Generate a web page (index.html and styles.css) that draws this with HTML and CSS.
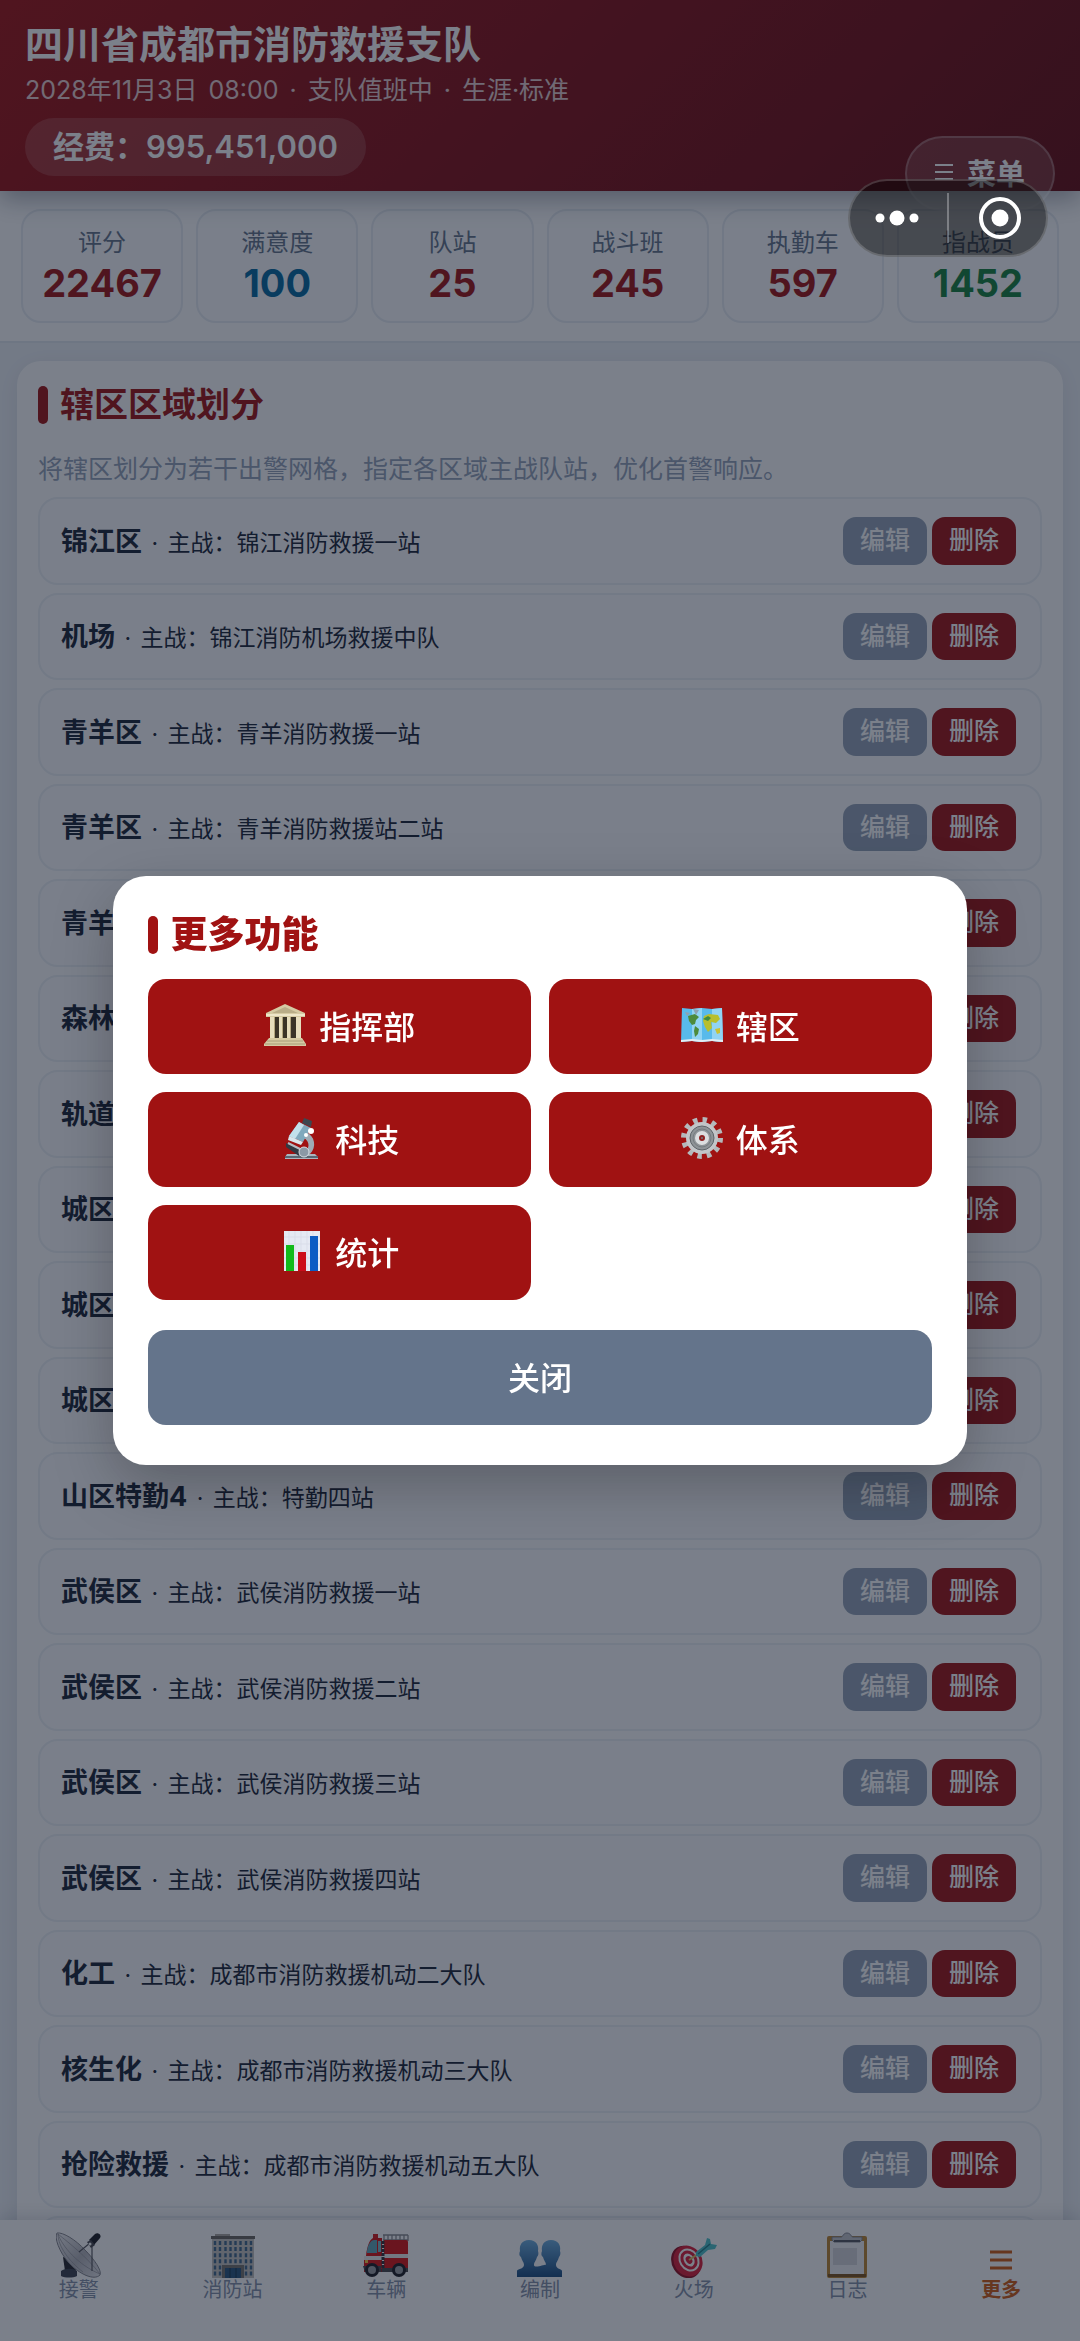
FILE: index.html
```html
<!DOCTYPE html>
<html lang="zh-CN">
<head>
    <meta charset="UTF-8">
    <meta name="viewport" content="width=device-width, initial-scale=1.0">
    <title>四川省成都市消防救援支队</title>
    <link rel="stylesheet" href="styles.css">
</head>
<body>
    <div class="app">
        <header class="header">
            <h1>四川省成都市消防救援支队</h1>
            <p class="subtitle"><span>2028年11月3日</span> <span>08:00</span> <span>·</span> <span>支队值班中</span> <span>·</span> <span>生涯·标准</span></p>
            <div class="budget">经费：995,451,000</div>
            <button type="button" class="menu-btn">
                <svg width="18" height="18" viewBox="0 0 18 18"><path d="M0 2h18M0 9h18M0 16h18" stroke="currentColor" stroke-width="2"/></svg>
                菜单
            </button>
        </header>

        <section class="stats">
            <div class="stat"><span>评分</span><b>22467</b></div>
            <div class="stat blue"><span>满意度</span><b>100</b></div>
            <div class="stat"><span>队站</span><b>25</b></div>
            <div class="stat"><span>战斗班</span><b>245</b></div>
            <div class="stat"><span>执勤车</span><b>597</b></div>
            <div class="stat green"><span>指战员</span><b>1452</b></div>
        </section>

        <main class="content">
            <section class="panel">
                <h2 class="section-title">辖区区域划分</h2>
                <p class="hint">将辖区划分为若干出警网格，指定各区域主战队站，优化首警响应。</p>
                <ul class="zones">
                    <li><p><strong>锦江区</strong> <span class="dot">·</span> 主战：锦江消防救援一站</p><button type="button" class="edit">编辑</button><button type="button" class="delete">删除</button></li>
                    <li><p><strong>机场</strong> <span class="dot">·</span> 主战：锦江消防机场救援中队</p><button type="button" class="edit">编辑</button><button type="button" class="delete">删除</button></li>
                    <li><p><strong>青羊区</strong> <span class="dot">·</span> 主战：青羊消防救援一站</p><button type="button" class="edit">编辑</button><button type="button" class="delete">删除</button></li>
                    <li><p><strong>青羊区</strong> <span class="dot">·</span> 主战：青羊消防救援站二站</p><button type="button" class="edit">编辑</button><button type="button" class="delete">删除</button></li>
                    <li><p><strong>青羊区</strong></p><button type="button" class="edit">编辑</button><button type="button" class="delete">删除</button></li>
                    <li><p><strong>森林</strong></p><button type="button" class="edit">编辑</button><button type="button" class="delete">删除</button></li>
                    <li><p><strong>轨道</strong></p><button type="button" class="edit">编辑</button><button type="button" class="delete">删除</button></li>
                    <li><p><strong>城区</strong></p><button type="button" class="edit">编辑</button><button type="button" class="delete">删除</button></li>
                    <li><p><strong>城区</strong></p><button type="button" class="edit">编辑</button><button type="button" class="delete">删除</button></li>
                    <li><p><strong>城区</strong></p><button type="button" class="edit">编辑</button><button type="button" class="delete">删除</button></li>
                    <li><p><strong>山区特勤4</strong> <span class="dot">·</span> 主战：特勤四站</p><button type="button" class="edit">编辑</button><button type="button" class="delete">删除</button></li>
                    <li><p><strong>武侯区</strong> <span class="dot">·</span> 主战：武侯消防救援一站</p><button type="button" class="edit">编辑</button><button type="button" class="delete">删除</button></li>
                    <li><p><strong>武侯区</strong> <span class="dot">·</span> 主战：武侯消防救援二站</p><button type="button" class="edit">编辑</button><button type="button" class="delete">删除</button></li>
                    <li><p><strong>武侯区</strong> <span class="dot">·</span> 主战：武侯消防救援三站</p><button type="button" class="edit">编辑</button><button type="button" class="delete">删除</button></li>
                    <li><p><strong>武侯区</strong> <span class="dot">·</span> 主战：武侯消防救援四站</p><button type="button" class="edit">编辑</button><button type="button" class="delete">删除</button></li>
                    <li><p><strong>化工</strong> <span class="dot">·</span> 主战：成都市消防救援机动二大队</p><button type="button" class="edit">编辑</button><button type="button" class="delete">删除</button></li>
                    <li><p><strong>核生化</strong> <span class="dot">·</span> 主战：成都市消防救援机动三大队</p><button type="button" class="edit">编辑</button><button type="button" class="delete">删除</button></li>
                    <li><p><strong>抢险救援</strong> <span class="dot">·</span> 主战：成都市消防救援机动五大队</p><button type="button" class="edit">编辑</button><button type="button" class="delete">删除</button></li>
                    <li></li>
                </ul>
            </section>
        </main>

        <nav class="tabbar">
            <a href="#alarm">
                <!-- satellite dish -->
                <svg viewBox="0 0 46 46">
                    <defs><linearGradient id="dish" x1="0" y1="0" x2="1" y2="1"><stop offset="0" stop-color="#f4f4f6"/><stop offset=".55" stop-color="#b4b4ba"/><stop offset="1" stop-color="#e6e6ea"/></linearGradient></defs>
                    <path d="M7 25l11 4 2 9-11 1z" fill="#24242a"/>
                    <path d="M5 39c4-3 13-3 16 0v5c-4 2-12 2-16 0z" fill="#3d424e"/>
                    <path d="M1 1C7 0 20 8 29 18c10 10 17 21 15 25-6 6-21-1-31-12C3 20-2 5 1 1z" fill="url(#dish)" stroke="#85858c"/>
                    <path d="M2 2c4 12 20 31 42 40M2 2c11 9 28 22 42 40M2 2c0 13 12 28 25 38" fill="none" stroke="#909098" stroke-width=".7"/>
                    <path d="M23 20l11-9M36 15v24M34 11l2 4" fill="none" stroke="#55555c" stroke-width="1.2"/>
                    <path d="M33 8l6-6c3-2 7 1 5 4l-6 7z" fill="#1c1c22"/>
                    <path d="M31 10l4-2 4 5-4 3z" fill="#45454c"/><circle cx="34" cy="12" r="1.5" fill="#fff"/>
                </svg>
                接警
            </a>
            <a href="#stations">
                <!-- office building -->
                <svg viewBox="0 0 46 46">
                    <path d="M5 2h15v4H5z" fill="#aaa69f"/>
                    <path d="M2 6h42v40H2z" fill="#c5c3bf"/>
                    <path d="M1 4h44v3H1z" fill="#6a6660"/>
                    <g stroke="#3f678a" stroke-width="2.4" stroke-dasharray="4 2.1">
                        <path d="M5 9v36M10 9v36M15.500 9v24M20.500 9v24M25.500 9v24M30.500 9v24M36 9v36M41 9v36"/>
                    </g>
                    <path d="M12 33h22v13H12z" fill="#77736d"/><path d="M15 36h16v10H15z" fill="#29567c"/>
                    <path d="M20 36v10M26 36v10" stroke="#17344d"/>
                </svg>
                消防站
            </a>
            <a href="#vehicles">
                <!-- fire engine -->
                <svg viewBox="0 0 46 46">
                    <path d="M20 3h25M20 8h25M21 3v6M25 3v6M29 3v6M33 3v6M37 3v6M41 3v6M45 3v6" stroke="#8b8d91" stroke-width="1.3"/>
                    <path d="M10 2h5v5h-5z" fill="#d81c1c"/>
                    <path d="M3 24C4 14 7 6 11 6h8v34H1V28z" fill="#da1212"/>
                    <path d="M4 19c1-7 4-11 7-11h3v13H4z" fill="#5fa6b8"/><path d="M15 9h3v11h-3z" fill="#79bbca"/>
                    <path d="M21 8h22q2 0 2 2v29H21z" fill="#da1212"/>
                    <path d="M1 24h18v4H1zM21 22h24v4H21z" fill="#eee"/>
                    <path d="M20 9v31" stroke="#303038" stroke-width="3" stroke-dasharray="3 1"/>
                    <path d="M0 34h18v6H2zM19 36h26v4H19z" fill="#45454b"/>
                    <path d="M2 28h3v3H2z" fill="#f6c842"/>
                    <circle cx="9" cy="38" r="7" fill="#1c1c22"/><circle cx="9" cy="38" r="4" fill="#9b9da3"/>
                    <circle cx="36" cy="38" r="7" fill="#1c1c22"/><circle cx="36" cy="38" r="4" fill="#9b9da3"/>
                </svg>
                车辆
            </a>
            <a href="#roster">
                <!-- two busts -->
                <svg viewBox="0 0 46 46">
                    <defs><linearGradient id="bust" x1="0" y1="0" x2="0" y2="1"><stop offset="0" stop-color="#6caee0"/><stop offset="1" stop-color="#1b4c80"/></linearGradient></defs>
                    <path d="M12 8c7 0 10 5 9 11 1 3 0 5-1 6-1 4-3 5-3 8 0 4 12-1 12 0 0-3-2-4-3-8-2-1-2-4-1-6-1-6 2-11 9-11s10 5 9 11c1 2 0 5-1 6-1 4-3 5-3 8 0 4 6 4 6 6v6H0v-6c0-2 7-2 7-6 0-3-2-4-3-8-2-1-2-4-1-6-1-6 2-11 9-11z" fill="url(#bust)"/>
                </svg>
                编制
            </a>
            <a href="#scene">
                <!-- dart on target -->
                <svg viewBox="0 0 46 46">
                    <ellipse cx="15" cy="30" rx="14" ry="17" transform="rotate(-32 15 30)" fill="#920d20"/>
                    <ellipse cx="17" cy="29" rx="14" ry="16" transform="rotate(-32 17 29)" fill="#dc1c36"/>
                    <ellipse cx="18" cy="28" rx="10" ry="12" transform="rotate(-32 18 28)" fill="#fff"/>
                    <ellipse cx="18" cy="28" rx="8" ry="10" transform="rotate(-32 18 28)" fill="#dc1c36"/>
                    <ellipse cx="18" cy="28" rx="5" ry="7" transform="rotate(-32 18 28)" fill="#fff"/>
                    <ellipse cx="18" cy="28" rx="3" ry="4" transform="rotate(-32 18 28)" fill="#dc1c36"/>
                    <path d="M18 28l9-6" stroke="#e1c25b" stroke-width="2"/>
                    <path d="M25 20l9-7 2-7 3 1 1 5 6 1-2 4-7 1-8 7-4-1z" fill="#4cc4cb"/>
                    <path d="M27 22l12-10" stroke="#217e8b" stroke-width="1.5"/>
                </svg>
                火场
            </a>
            <a href="#log">
                <!-- clipboard -->
                <svg viewBox="0 0 46 46">
                    <rect x="3" y="4" width="40" height="42" rx="2" fill="#bd862f"/>
                    <path d="M4 42h38v3H4z" fill="#7c531d"/>
                    <path d="M6 9h34v33H6z" fill="#f2f2f4"/><path d="M9 16h24v17H9z" fill="#d4d4d9"/>
                    <path d="M8 5h9c2 0 2-4 6-4s4 4 6 4h9v3l-2 2H10l-2-2z" fill="#c3c5cb" stroke="#83858e"/>
                    <path d="M10 9h26" stroke="#55575f" stroke-width="2"/>
                </svg>
                日志
            </a>
            <a href="#more" class="active">
                <svg viewBox="0 0 46 46"><path d="M12 20h22M12 28h22M12 36h22" stroke="currentColor" stroke-width="3"/></svg>
                更多
            </a>
        </nav>
    </div>

    <div class="mask">
        <div class="modal" role="dialog" aria-labelledby="moreTitle">
            <h2 class="section-title" id="moreTitle">更多功能</h2>
            <div class="modal-grid">
                <button type="button">
                    <!-- classical building -->
                    <svg viewBox="0 0 42 42">
                        <path d="M6 12h31v22H6z" fill="#3b3428"/>
                        <path d="M6 12h5v22H6zM15 12h4v22h-4zM23 12h4v22h-4zM32 12h5v22h-5z" fill="#e6ddbd"/>
                        <path d="M10 12h1v22h-1zM18 12h1v22h-1zM26 12h1v22h-1z" fill="#b3a67f"/>
                        <path d="M21 0l20 9v4H2V9z" fill="#d5caa3"/><path d="M21 3l13 6H8z" fill="#b9ad88"/>
                        <path d="M2 10h39v2H2z" fill="#eee6c9"/>
                        <path d="M5 34h33l4 6v2H0v-2z" fill="#d5caa3"/><path d="M3 37h36M1 40h40" stroke="#a89c78"/>
                    </svg>
                    指挥部
                </button>
                <button type="button">
                    <!-- folded world map -->
                    <svg viewBox="0 0 42 42">
                        <path d="M1 4l10 1 10-1 10 1 10-1 1 34-11-1-10 1-10-1-11 1z" fill="#58baeb"/>
                        <path d="M11 5l10-1v34l-10-1zM31 5l10-1 1 34-11-1z" fill="#91d4f4"/>
                        <path d="M7 12l7-2 4 3-3 3-1 4-3 1-3-4zM14 22l4 3-1 5-3 3-1-6z" fill="#4d8b3c"/>
                        <path d="M23 12l5-2 9 1 2 4-4 4-5-1 1 6-4 4-3-5-2-6z" fill="#b8bf2d"/>
                        <path d="M22 15l5-3 3 2-3 3z" fill="#3f8b3f"/><path d="M34 25l5-1v5l-3 1z" fill="#c9c136"/>
                        <path d="M12 5l6 1-3 5zM4 8l5 1-3 3z" fill="#8da2b2"/>
                        <path d="M0 36l11-1 10 1 10-1 11 1v2l-11-1-10 1-10-1-11 1z" fill="#e3eef3"/>
                    </svg>
                    辖区
                </button>
                <button type="button">
                    <!-- microscope -->
                    <svg viewBox="0 0 42 42">
                        <path d="M26 15c9 4 11 15 4 22l-6-1c6-5 6-11 0-15z" fill="#9eabb5"/>
                        <path d="M7 37h28l3 3v2H5v-2z" fill="#aab5be"/><path d="M5 40h33" stroke="#5a6772" stroke-width="2"/>
                        <path d="M6 26l16 8-3 5L6 30z" fill="#313a43"/><path d="M8 26l14 7" stroke="#b2bec7" stroke-width="2"/>
                        <circle cx="24" cy="35" r="5" fill="#8b99a5" stroke="#d6dde2"/>
                        <path d="M19 5l12 6-8 14-14-6z" fill="#80a9bd"/><path d="M19 5l5 3-9 14-6-3z" fill="#c2e0eb"/>
                        <path d="M24 1l8 3-1 6-9-4z" fill="#3d4750"/><path d="M9 19l14 6-2 3-13-5z" fill="#d8e6ec"/>
                        <circle cx="31" cy="14" r="3" fill="#fff"/><circle cx="26" cy="18" r="2" fill="#fff"/>
                    </svg>
                    科技
                </button>
                <button type="button">
                    <!-- gear -->
                    <svg viewBox="0 0 42 42">
                        <circle cx="21" cy="21" r="18" fill="none" stroke="#b4b8bb" stroke-width="6" stroke-dasharray="4.400 5.025"/>
                        <circle cx="21" cy="21" r="14" fill="#8e9397" stroke="#c2c5c8" stroke-width="4"/>
                        <circle cx="21" cy="21" r="12" fill="none" stroke="#5f656a"/>
                        <circle cx="21" cy="21" r="9" fill="none" stroke="#767c80"/>
                        <circle cx="21" cy="21" r="5" fill="#8e2020" stroke="#dcdee0" stroke-width="4"/>
                        <circle cx="21" cy="21" r="1" fill="#777c80"/>
                    </svg>
                    体系
                </button>
                <button type="button">
                    <!-- bar chart -->
                    <svg viewBox="0 0 42 42">
                        <path d="M4 1h36v40H4z" fill="#e5e9f3"/>
                        <path d="M4 7h36M4 14h36M4 21h36M4 28h36M4 35h36M9 1v40M15 1v40M21 1v40M27 1v40M33 1v40" stroke="#d5dae6" stroke-width=".7"/>
                        <path d="M6 15h8v26H6z" fill="#12ba1b"/><path d="M18 22h8v19h-8z" fill="#cc0d19"/><path d="M30 6h8v35h-8z" fill="#0b5cc4"/>
                    </svg>
                    统计
                </button>
            </div>
            <button type="button" class="close">关闭</button>
        </div>
    </div>

    <!-- mini program capsule -->
    <div class="capsule">
        <button type="button" aria-label="更多操作">
            <svg width="44" height="44" viewBox="0 0 44 44" fill="#fff"><circle cx="5" cy="22" r="4.500"/><circle cx="22" cy="22" r="7.500"/><circle cx="39" cy="22" r="4.500"/></svg>
        </button>
        <button type="button" aria-label="退出">
            <svg width="44" height="44" viewBox="0 0 44 44"><circle cx="22" cy="22" r="19" fill="none" stroke="#fff" stroke-width="4"/><circle cx="22" cy="22" r="8.500" fill="#fff"/></svg>
        </button>
    </div>
</body>
</html>
```
FILE: styles.css
```css
* {
    box-sizing: border-box;
}
body {
    margin: 0;
    font-family: Inter, "Noto Sans CJK SC", sans-serif;
    line-height: 1.5;
    color: #1a2436;
    background: #eef2f7;
}
h1, h2, p, ul {
    margin: 0;
    padding: 0;
}
button {
    font-family: inherit;
    border: none;
    cursor: pointer;
}
.app {
    display: flex;
    flex-direction: column;
    height: 100vh;
}

/* header */
.header {
    position: relative;
    z-index: 2;
    padding: 20px 25px 15px;
    color: #fff;
    background: linear-gradient(135deg, #a01212 0%, #860f15 45%, #650b10 100%);
    box-shadow: 0 8px 24px rgba(15, 23, 42, 0.35);
}
.header h1 {
    font-size: 38px;
    line-height: 48px;
}
.subtitle {
    display: flex;
    gap: 11px;
    margin-top: 4px;
    font-size: 25px;
    line-height: 36px;
    opacity: 0.8;
}
.budget {
    display: inline-block;
    margin-top: 10px;
    padding: 0 28px;
    font-size: 31px;
    font-weight: 600;
    line-height: 58px;
    vertical-align: top;
    border-radius: 29px;
    background: rgba(255, 255, 255, 0.15);
}
.menu-btn {
    position: absolute;
    right: 25px;
    bottom: -20px;
    display: flex;
    align-items: center;
    gap: 14px;
    height: 75px;
    padding: 0 28px 4px;
    font-size: 29px;
    font-weight: 600;
    color: #fff;
    border: 2px solid rgba(255, 255, 255, 0.25);
    border-radius: 38px;
    background: rgba(255, 255, 255, 0.15);
}

/* stats */
.stats {
    display: grid;
    grid-template-columns: repeat(6, 1fr);
    gap: 13px;
    padding: 18px 21px;
    background: #fff;
    border-bottom: 2px solid #e2e8f0;
}
.stat {
    display: flex;
    flex-direction: column;
    align-items: center;
    padding: 14px 0 16px;
    border: 2px solid #e8edf3;
    border-radius: 20px;
    background: #fcfdfe;
    color: #a01212;
}
.stat span {
    font-size: 24px;
    line-height: 36px;
    color: #64748b;
}
.stat b {
    font-size: 38px;
    line-height: 44px;
}
.stat.blue b {
    color: #0369a1;
}
.stat.green b {
    color: #15803d;
}

/* zone list */
.content {
    flex: 1;
    min-height: 0;
    overflow: hidden;
    padding: 18px 17px 0;
}
.panel {
    padding: 20px 21px;
    border-radius: 24px;
    background: #fff;
    box-shadow: 0 4px 24px rgba(15, 23, 42, 0.08);
}
.section-title {
    display: flex;
    align-items: center;
    gap: 12px;
    font-size: 34px;
    line-height: 48px;
    color: #a01212;
}
.section-title::before {
    content: "";
    width: 10px;
    height: 38px;
    border-radius: 5px;
    background: #a01212;
}
.hint {
    margin: 21px 0 9px;
    font-size: 25px;
    line-height: 38px;
    color: #94a3b8;
}
.zones {
    display: flex;
    flex-direction: column;
    gap: 8px;
    list-style: none;
}
.zones li {
    display: flex;
    align-items: center;
    gap: 5px;
    min-height: 87px;
    padding: 18px 24px 18px 21px;
    border: 2px solid #edf1f6;
    border-radius: 20px;
    background: #fcfdfe;
}
.zones p {
    flex: 1;
    padding-top: 2px;
    font-size: 23px;
}
.zones strong {
    font-size: 27px;
}
.zones .dot {
    margin: 0 3px;
}
.zones button {
    padding: 5px 17px;
    font-size: 25px;
    font-weight: 500;
    line-height: 1.5;
    color: #fff;
    border-radius: 13px;
}
.zones .edit {
    background: #94a3b8;
}
.zones .delete {
    background: #a01212;
}

/* bottom tabs */
.tabbar {
    z-index: 2;
    display: grid;
    grid-template-columns: repeat(7, 1fr);
    height: 121px;
    padding: 12px 2px 0;
    background: #fff;
    box-shadow: 0 -3px 16px rgba(15, 23, 42, 0.15);
}
.tabbar a {
    display: flex;
    flex-direction: column;
    align-items: center;
    font-size: 20px;
    line-height: 24px;
    color: #8490a8;
    text-decoration: none;
}
.tabbar svg {
    width: 46px;
    height: 46px;
}
.tabbar .active {
    font-weight: 700;
    color: #d05c12;
}

/* more dialog */
.mask {
    position: fixed;
    inset: 0;
    z-index: 10;
    display: flex;
    align-items: center;
    justify-content: center;
    background: rgba(15, 23, 42, 0.55);
}
.modal {
    width: 79%;
    padding: 35px 35px 40px;
    border-radius: 33px;
    background: #fff;
    box-shadow: 0 20px 60px rgba(0, 0, 0, 0.25);
}
.modal .section-title {
    font-size: 37px;
    font-weight: 900;
}
.modal-grid {
    display: grid;
    grid-template-columns: 1fr 1fr;
    gap: 18px;
    margin: 20px 0 30px;
}
.modal button {
    display: flex;
    align-items: center;
    justify-content: center;
    gap: 13px;
    height: 95px;
    padding-bottom: 4px;
    font-size: 32px;
    font-weight: 500;
    color: #fff;
    border-radius: 18px;
    background: #a01212;
}
.modal svg {
    width: 42px;
    height: 42px;
}
.modal .close {
    width: 100%;
    background: #64748b;
}

.capsule {
    position: fixed;
    top: 179px;
    right: 32px;
    z-index: 20;
    display: flex;
    width: 200px;
    height: 78px;
    border: 2px solid rgba(255, 255, 255, 0.18);
    border-radius: 39px;
    background: rgba(0, 0, 0, 0.42);
}
.capsule button {
    flex: 1;
    display: flex;
    align-items: center;
    justify-content: center;
    margin: 12px 0;
    padding: 0 4px 0 0;
    background: none;
}
.capsule button + button {
    padding: 0 0 0 4px;
    border-left: 2px solid rgba(255, 255, 255, 0.3);
}
```
